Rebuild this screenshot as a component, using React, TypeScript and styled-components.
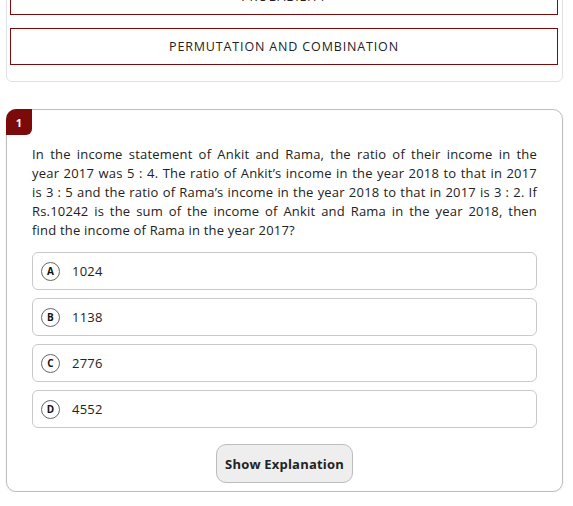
import React from "react";
import styled, { createGlobalStyle } from "styled-components";

const Global = createGlobalStyle`
  html, body { margin: 0; padding: 0; background: #fff; }
  body { font-family: "Open Sans", "Liberation Sans", sans-serif; color: #212529; }
  * { box-sizing: border-box; }
`;

const Page = styled.div`
  width: 557px;
  margin-left: 6px;
  display: flex;
  flex-direction: column;
  gap: 27px;
`;

const TopicCard = styled.div`
  margin-top: -33px;
  border: 1px solid #dfe2e6;
  border-radius: 0 0 6px 6px;
  padding: 10px 4px 16px 3px;
  display: flex;
  flex-direction: column;
  gap: 13px;
`;

const TopicBox = styled.div`
  height: 37px;
  border: 1px solid #7d0a0a;
  display: flex;
  align-items: center;
  justify-content: center;
  font-size: 12.5px;
  letter-spacing: 0.85px;
  color: #222;
`;

const QuestionCard = styled.div`
  position: relative;
  border: 1px solid #bdbdbd;
  border-radius: 10px;
  box-shadow: 0 1px 2px rgba(0, 0, 0, 0.08);
  padding: 35px 25px 8px 25px;
  display: flex;
  flex-direction: column;
`;

const Badge = styled.div`
  position: absolute;
  top: -1px;
  left: -1px;
  width: 26px;
  height: 26px;
  background: #7b0b0b;
  color: #fff;
  font-weight: 700;
  font-size: 11px;
  border-radius: 10px 0 6px 0;
  display: flex;
  align-items: center;
  justify-content: center;
`;

const QuestionText = styled.p`
  margin: 0 0 12px 0;
  font-size: 13px;
  line-height: 19px;
  letter-spacing: 0.2px;
  color: #222;
`;

const Line = styled.span<{ $last?: boolean }>`
  display: block;
  white-space: nowrap;
  text-align: ${(p) => (p.$last ? "left" : "justify")};
  text-align-last: ${(p) => (p.$last ? "left" : "justify")};
`;

const Options = styled.div`
  display: flex;
  flex-direction: column;
  gap: 8px;
`;

const Option = styled.div`
  height: 38px;
  border: 1px solid #c9c9c9;
  border-radius: 6px;
  display: flex;
  align-items: center;
  padding-left: 8px;
  gap: 12px;
  font-size: 13px;
  color: #222;
  letter-spacing: 0.2px;
`;

const Letter = styled.span`
  width: 19px;
  height: 19px;
  border-radius: 50%;
  border: 1px solid #666;
  display: flex;
  align-items: center;
  justify-content: center;
  font-size: 10px;
  font-weight: 700;
  color: #111;
`;

const ButtonRow = styled.div`
  display: flex;
  justify-content: center;
  margin-top: 16px;
`;

const ExplainButton = styled.button`
  width: 137px;
  height: 39px;
  background: #eeeeee;
  border: 1px solid #bcbcbc;
  border-radius: 10px;
  font-family: inherit;
  font-size: 13px;
  font-weight: 700;
  letter-spacing: 0.2px;
  color: #222;
  cursor: pointer;
`;

const options = [
  { key: "A", value: "1024" },
  { key: "B", value: "1138" },
  { key: "C", value: "2776" },
  { key: "D", value: "4552" },
];

const lines = [
  "In the income statement of Ankit and Rama, the ratio of their income in the",
  "year 2017 was 5 : 4. The ratio of Ankit\u2019s income in the year 2018 to that in 2017",
  "is 3 : 5 and the ratio of Rama\u2019s income in the year 2018 to that in 2017 is 3 : 2. If",
  "Rs.10242 is the sum of the income of Ankit and Rama in the year 2018, then",
  "find the income of Rama in the year 2017?",
];

export default function App() {
  return (
    <>
      <Global />
      <Page>
        <TopicCard>
          <TopicBox>PROBABILITY</TopicBox>
          <TopicBox>PERMUTATION AND COMBINATION</TopicBox>
        </TopicCard>
        <QuestionCard>
          <Badge>1</Badge>
          <QuestionText>
            {lines.map((l, i) => (
              <Line key={i} $last={i === lines.length - 1}>
                {l}
              </Line>
            ))}
          </QuestionText>
          <Options>
            {options.map((o) => (
              <Option key={o.key}>
                <Letter>{o.key}</Letter>
                {o.value}
              </Option>
            ))}
          </Options>
          <ButtonRow>
            <ExplainButton>Show Explanation</ExplainButton>
          </ButtonRow>
        </QuestionCard>
      </Page>
    </>
  );
}
